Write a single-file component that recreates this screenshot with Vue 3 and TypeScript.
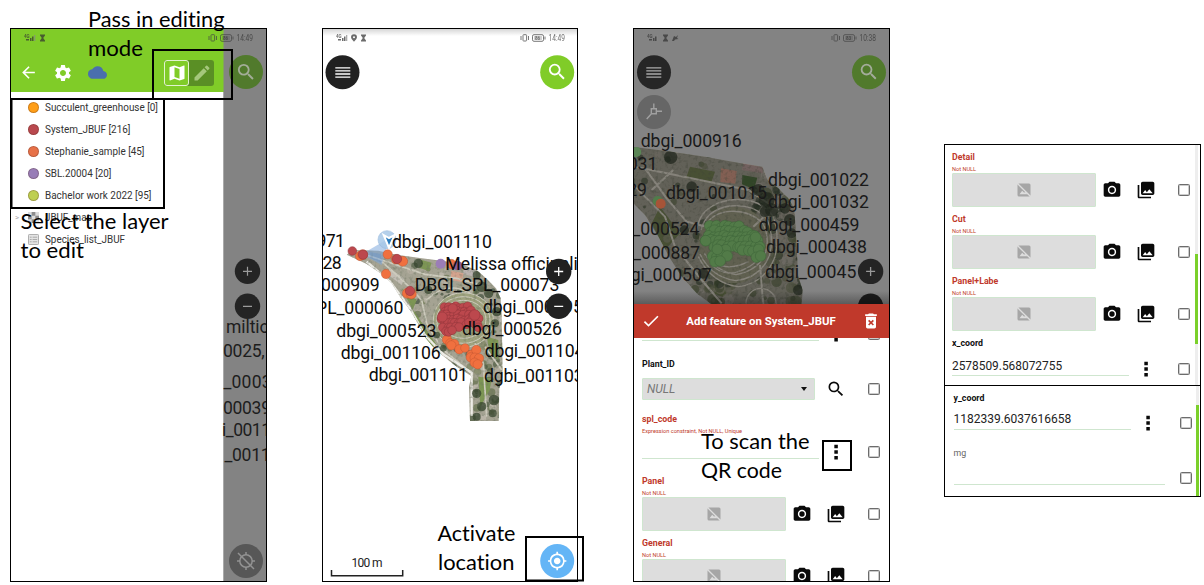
<script setup lang="ts">
interface Label { t: string; x: number; y: number; w: number }
interface Dot { x: number; y: number; r: number; c?: string }
interface Field {
  label: string
  hint?: string
  kind: 'media' | 'text' | 'combo' | 'wide'
  value?: string
  plain?: boolean
}

const icons = {
  search: 'M15.5 14h-.79l-.28-.27A6.471 6.471 0 0 0 16 9.5 6.5 6.5 0 1 0 9.5 16c1.61 0 3.09-.59 4.23-1.57l.27.28v.79l5 4.99L20.49 19l-4.99-5zm-6 0C7.01 14 5 11.99 5 9.5S7.01 5 9.5 5 14 7.01 14 9.5 11.99 14 9.5 14z',
  back: 'M20 11H7.83l5.59-5.59L12 4l-8 8 8 8 1.41-1.41L7.83 13H20v-2z',
  gear: 'M19.14 12.94c.04-.3.06-.61.06-.94 0-.32-.02-.64-.07-.94l2.03-1.58a.49.49 0 0 0 .12-.61l-1.92-3.32a.488.488 0 0 0-.59-.22l-2.39.96c-.5-.38-1.03-.7-1.62-.94l-.36-2.54a.484.484 0 0 0-.48-.41h-3.84c-.24 0-.43.17-.47.41l-.36 2.54c-.59.24-1.13.57-1.62.94l-2.39-.96c-.22-.08-.47 0-.59.22L2.74 8.87c-.12.21-.08.47.12.61l2.03 1.58c-.05.3-.09.63-.09.94s.02.64.07.94l-2.03 1.58a.49.49 0 0 0-.12.61l1.92 3.32c.12.22.37.29.59.22l2.39-.96c.5.38 1.03.7 1.62.94l.36 2.54c.05.24.24.41.48.41h3.84c.24 0 .44-.17.47-.41l.36-2.54c.59-.24 1.13-.56 1.62-.94l2.39.96c.22.08.47 0 .59-.22l1.92-3.32c.12-.22.07-.47-.12-.61l-2.01-1.58zM12 15.6c-1.98 0-3.6-1.62-3.6-3.6s1.62-3.6 3.6-3.6 3.6 1.62 3.6 3.6-1.62 3.6-3.6 3.6z',
  cloud: 'M19.35 10.04A7.49 7.49 0 0 0 12 4C9.11 4 6.6 5.64 5.35 8.04A5.994 5.994 0 0 0 0 14c0 3.31 2.69 6 6 6h13c2.76 0 5-2.24 5-5 0-2.64-2.05-4.78-4.65-4.96z',
  map: 'M20.5 3l-.16.03L15 5.1 9 3 3.36 4.9c-.21.07-.36.25-.36.48V20.5c0 .28.22.5.5.5l.16-.03L9 18.9l6 2.1 5.64-1.9c.21-.07.36-.25.36-.48V3.5c0-.28-.22-.5-.5-.5zM15 19l-6-2.11V5l6 2.11V19z',
  edit: 'M3 17.25V21h3.75L17.81 9.94l-3.75-3.75L3 17.25zM20.71 7.04a1 1 0 0 0 0-1.41l-2.34-2.34a1 1 0 0 0-1.41 0l-1.83 1.83 3.75 3.75 1.83-1.83z',
  camera: 'M12 8.8a3.2 3.2 0 1 0 0 6.4 3.2 3.2 0 0 0 0-6.4zM9 2L7.17 4H4c-1.1 0-2 .9-2 2v12c0 1.1.9 2 2 2h16c1.1 0 2-.9 2-2V6c0-1.1-.9-2-2-2h-3.17L15 2H9zm3 15c-2.76 0-5-2.24-5-5s2.24-5 5-5 5 2.24 5 5-2.24 5-5 5z',
  gallery: 'M22 16V4c0-1.1-.9-2-2-2H8c-1.1 0-2 .9-2 2v12c0 1.1.9 2 2 2h12c1.1 0 2-.9 2-2zm-11-4l2.03 2.71L16 11l4 5H8l3-4zM2 6v14c0 1.1.9 2 2 2h14v-2H4V6H2z',
  check: 'M9 16.17L4.83 12l-1.42 1.41L9 19 21 7l-1.41-1.41z',
  trash: 'M6 19c0 1.1.9 2 2 2h8c1.1 0 2-.9 2-2V7H6v12zm2.46-7.12l1.41-1.41L12 12.59l2.12-2.12 1.41 1.41L13.41 14l2.12 2.12-1.41 1.41L12 15.41l-2.12 2.12-1.41-1.41L10.59 14l-2.13-2.12zM15.5 4l-1-1h-5l-1 1H5v2h14V4z',
  gps: 'M12 8c-2.21 0-4 1.79-4 4s1.79 4 4 4 4-1.79 4-4-1.79-4-4-4zm8.94 3A8.994 8.994 0 0 0 13 3.06V1h-2v2.06A8.994 8.994 0 0 0 3.06 11H1v2h2.06A8.994 8.994 0 0 0 11 20.94V23h2v-2.06A8.994 8.994 0 0 0 20.94 13H23v-2h-2.06zM12 19c-3.87 0-7-3.13-7-7s3.13-7 7-7 7 3.13 7 7-3.13 7-7 7z',
  dots: 'M10 3.2h4.200v4.200H10zM10 10h4.200v4.200H10zM10 16.800h4.200v4.200H10z',
}

const layers = [
  { name: 'Succulent_greenhouse [0]', color: '#ff9e17', w: 113 },
  { name: 'System_JBUF [216]', color: '#b9484e', w: 85.5 },
  { name: 'Stephanie_sample [45]', color: '#e77148', w: 99.5 },
  { name: 'SBL.20004 [20]', color: '#987db7', w: 66.5 },
  { name: 'Bachelor work 2022 [95]', color: '#becf50', w: 106.5 },
]

const stripLabels: Label[] = [
  { t: 'miltiorrhiza', x: 226, y: 332.5, w: 87 },
  { t: '0025, SPL', x: 223, y: 356.5, w: 76 },
  { t: '_0003', x: 223.5, y: 388, w: 48 },
  { t: '00039', x: 223, y: 414, w: 48 },
  { t: 'i_0011', x: 222, y: 435.5, w: 49 },
  { t: '_0011', x: 224.5, y: 461, w: 46 },
]

const mapLabels: Label[] = [
  { t: '_000971', x: -86, y: 80, w: 191 },
  { t: '_000928', x: -96, y: 147, w: 191 },
  { t: 'dbgi_000909', x: -91, y: 214, w: 300 },
  { t: 'DBGI_SPL_000060', x: -153, y: 281, w: 433 },
  { t: 'dbgi_000523', x: 79, y: 351, w: 300 },
  { t: 'dbgi_001106', x: 92, y: 418, w: 300 },
  { t: 'dbgi_001101', x: 176, y: 482, w: 298 },
  { t: 'dbgi_001110', x: 246, y: 85, w: 300 },
  { t: 'Melissa officinalis', x: 406, y: 150, w: 425 },
  { t: 'DBGI_SPL_000073', x: 314, y: 213, w: 434 },
  { t: 'dbgi_000995', x: 519, y: 280, w: 300 },
  { t: 'dbgi_000526', x: 456, y: 345, w: 300 },
  { t: 'dbgi_001104', x: 524, y: 410, w: 299 },
  { t: 'dgbi_001103', x: 522, y: 487, w: 299 },
]

const dimLabels: Label[] = [
  { t: 'dbgi_000916', x: 47, y: 52, w: 303 },
  { t: 'dbgi_001031', x: -206, y: 120, w: 303 },
  { t: 'dbgi_000929', x: -237, y: 199, w: 303 },
  { t: 'dbgi_001015', x: 123, y: 207, w: 303 },
  { t: 'dbgi_001022', x: 429, y: 168, w: 303 },
  { t: 'dbgi_001032', x: 429, y: 235, w: 303 },
  { t: 'dbgi_000459', x: 401, y: 304, w: 302 },
  { t: 'dbgi_000438', x: 423, y: 368, w: 303 },
  { t: 'dbgi_00045', x: 420, y: 443, w: 274 },
  { t: 'dbgi_000524', x: -79, y: 316, w: 302 },
  { t: 'dbgi_000887', x: -77, y: 388, w: 302 },
  { t: 'dbgi_000507', x: -42, y: 452, w: 302 },
]

function rng(seed: number) {
  let s = seed
  return () => {
    s = (s * 16807) % 2147483647
    return s / 2147483647
  }
}

const leafTones = ['#45543a', '#5d6c46', '#7c8460', '#3b4937', '#a09f8c', '#b8b1a4', '#68754e', '#c4beb4']
function foliage(seed: number, n: number, x0: number, x1: number, y0: number, y1: number, size: number): Dot[] {
  const r = rng(seed)
  return Array.from({ length: n }, () => ({
    x: x0 + r() * (x1 - x0),
    y: y0 + r() * (y1 - y0),
    r: size * (0.4 + r()),
    c: leafTones[Math.floor(r() * leafTones.length)],
  }))
}

// Each row: [y, left, right]
function cluster(seed: number, rows: number[][], step: number, radius: number): Dot[] {
  const r = rng(seed)
  const out: Dot[] = []
  for (const [y, a, b] of rows) {
    for (let x = a; x <= b; x += step) out.push({ x: x + r() * 8 - 4, y: y + r() * 8 - 4, r: radius })
  }
  return out
}

const foliageA = [
  ...foliage(11, 130, 300, 580, 120, 450, 8),
  ...foliage(5, 45, 230, 480, 200, 440, 7),
  ...foliage(31, 60, 480, 580, 380, 600, 9),
]
const darkTreesA: Dot[] = [
  { x: 325, y: 130, r: 14 }, { x: 355, y: 210, r: 12 }, { x: 500, y: 165, r: 12 }, { x: 515, y: 200, r: 16 }, { x: 536, y: 220, r: 14 },
  { x: 560, y: 275, r: 14 }, { x: 555, y: 310, r: 12 }, { x: 380, y: 345, r: 10 }, { x: 500, y: 520, r: 14 }, { x: 515, y: 560, r: 14 },
  { x: 552, y: 540, r: 16 }, { x: 548, y: 580, r: 12 }, { x: 500, y: 590, r: 12 }, { x: 400, y: 385, r: 10 },
]
const foliageB = [
  ...foliage(17, 90, 20, 530, 40, 520, 9),
  ...foliage(23, 50, 380, 530, 130, 260, 13),
  ...foliage(41, 50, 420, 530, 250, 520, 13),
  ...foliage(7, 50, 150, 330, 430, 520, 13),
]
const darkTreesB: Dot[] = [
  { x: 137, y: 82, r: 20 }, { x: 200, y: 170, r: 16 }, { x: 400, y: 180, r: 18 }, { x: 425, y: 210, r: 24 }, { x: 440, y: 240, r: 20 },
  { x: 495, y: 270, r: 18 }, { x: 500, y: 310, r: 15 }, { x: 420, y: 245, r: 16 }, { x: 520, y: 480, r: 16 }, { x: 235, y: 430, r: 16 },
  { x: 178, y: 300, r: 14 }, { x: 480, y: 235, r: 16 },
]

const redCluster = cluster(3, [
  [262, 407, 475], [274, 408, 495], [286, 396, 502], [298, 396, 506], [310, 402, 505], [322, 402, 448], [334, 405, 428],
], 11, 13)
const redExtra: Dot[] = [
  { x: 428, y: 265, r: 14 }, { x: 494, y: 285, r: 16 }, { x: 397, y: 291, r: 15 }, { x: 505, y: 322, r: 13 },
]
const greenCluster = cluster(9, [
  [290, 258, 345], [304, 258, 380], [318, 252, 400], [332, 244, 405], [348, 265, 408], [362, 275, 312], [362, 355, 410], [378, 262, 310], [380, 398, 410], [396, 272, 290],
], 14, 16)
greenCluster.push({ x: 392, y: 322, r: 16 }, { x: 407, y: 378, r: 16 }, { x: 277, y: 358, r: 16 }, { x: 242, y: 332, r: 16 })

const orangeDots: Dot[] = [
  { x: 150, y: 108, r: 14 }, { x: 158, y: 104, r: 15 }, { x: 233, y: 103, r: 14 }, { x: 228, y: 162, r: 14 },
  { x: 258, y: 118, r: 14 }, { x: 278, y: 124, r: 15 }, { x: 292, y: 220, r: 15 }, { x: 304, y: 222, r: 15 },
  { x: 411, y: 359, r: 14 }, { x: 421, y: 370, r: 14 }, { x: 433, y: 372, r: 14 }, { x: 424, y: 376, r: 14 },
  { x: 448, y: 388, r: 14 }, { x: 465, y: 384, r: 13 }, { x: 484, y: 404, r: 14 }, { x: 499, y: 390, r: 14 },
  { x: 482, y: 412, r: 14 }, { x: 494, y: 413, r: 14 }, { x: 507, y: 415, r: 14 }, { x: 494, y: 428, r: 14 }, { x: 503, y: 433, r: 14 },
  { x: 424, y: 132, r: 14 },
]
const redDots: Dot[] = [
  { x: 127, y: 93, r: 13 }, { x: 159, y: 104, r: 14 }, { x: 261, y: 117, r: 14 }, { x: 300, y: 213, r: 14 },
]
const outlineA = '110,104 128,90 205,92 260,104 330,114 440,128 500,150 530,176 558,205 572,235 575,300 577,380 578,470 568,505 566,603 480,603 477,500 484,468 440,440 400,408 375,388 345,352 325,312 300,270 270,230 245,190 215,162 170,132'
const outlineB = '0,48 120,62 240,80 340,98 412,110 428,150 460,175 490,205 508,235 512,300 516,370 520,440 533,480 530,525 262,525 215,490 170,440 135,385 100,320 60,255 0,195'

const phoneForm: Field[] = [
  { label: 'Plant_ID', kind: 'combo', value: 'NULL' },
  { label: 'spl_code', hint: 'Expression constraint, Not NULL, Unique', kind: 'text' },
  { label: 'Panel', hint: 'Not NULL', kind: 'media' },
  { label: 'General', hint: 'Not NULL', kind: 'media' },
]
const upperForm: Field[] = [
  { label: 'Detail', hint: 'Not NULL', kind: 'media' },
  { label: 'Cut', hint: 'Not NULL', kind: 'media' },
  { label: 'Panel+Labe', hint: 'Not NULL', kind: 'media' },
  { label: 'x_coord', kind: 'text', value: '2578509.568072755' },
]
const lowerForm: Field[] = [
  { label: 'y_coord', kind: 'text', value: '1182339.6037616658' },
  { label: 'mg', kind: 'wide', plain: true },
]
const forms = { phone: phoneForm, upper: upperForm, lower: lowerForm }

const notes: Label[] = [
  { t: 'Pass in editing', x: 88, y: 26.5, w: 136.5 },
  { t: 'mode', x: 88, y: 55.5, w: 55 },
  { t: 'Select the layer', x: 20.5, y: 229, w: 148 },
  { t: 'to edit', x: 20.5, y: 258, w: 63.5 },
  { t: 'Activate', x: 437.5, y: 541, w: 78 },
  { t: 'location', x: 438, y: 569.7, w: 76.5 },
  { t: 'To scan the', x: 701, y: 448.7, w: 108.5 },
  { t: 'QR code', x: 701, y: 477.7, w: 81 },
]
const frames = [
  { x: 153, y: 50, w: 79, h: 49 },
  { x: 11.5, y: 99, w: 152.5, h: 109 },
  { x: 526, y: 537, w: 57, h: 43.5 },
  { x: 823, y: 441, w: 28, h: 29 },
]
const statusBars = [
  { x: 10, pin: false, bug: false, time: '14:49', level: '86' },
  { x: 322, pin: true, bug: false, time: '14:49', level: '86' },
  { x: 633, pin: false, bug: true, time: '10:38', level: '83' },
]
</script>

<template>
  <main class="board">
    <section class="phone">
      <div class="drawer">
        <header class="drawer-head">
          <svg class="i18" viewBox="0 0 24 24"><path :d="icons.back" /></svg>
          <svg class="i20" viewBox="0 0 24 24"><path :d="icons.gear" /></svg>
          <svg class="cloud" viewBox="0 0 24 24"><path :d="icons.cloud" /></svg>
          <div class="toggle">
            <span class="mode on"><svg class="i20" viewBox="0 0 24 24"><path :d="icons.map" /></svg></span>
            <span class="mode"><svg class="i20" viewBox="0 0 24 24"><path :d="icons.edit" /></svg></span>
          </div>
        </header>
        <ul class="layers">
          <li v-for="l in layers" :key="l.name">
            <i class="swatch" :style="{ background: l.color }"></i>
            <svg class="layer-name" height="14" width="150"><text x="0" y="10.500" :textLength="l.w" lengthAdjust="spacingAndGlyphs">{{ l.name }}</text></svg>
          </li>
          <li>
            <span class="caret">&gt;</span>
            <svg class="raster" viewBox="0 0 12 12"><path fill="#ddd" d="M0 0h12v12H0z" /><path fill="#8d8d8d" d="M4 0h4v4H4zM0 4h4v4H0zM8 4h4v4H8zM4 8h4v4H4z" /></svg>
            <svg class="layer-name" height="14" width="150"><text x="0" y="10.500" textLength="47" lengthAdjust="spacingAndGlyphs">JBUF_map</text></svg>
          </li>
          <li>
            <svg class="raster" viewBox="0 0 12 12"><rect x=".5" y=".5" width="11" height="11" rx="1" fill="#e4e4e4" stroke="#a5a5a5" /><path stroke="#a5a5a5" d="M2 3.500h2M5 3.500h5M2 6h2M5 6h5M2 8.500h2M5 8.500h5" /></svg>
            <svg class="layer-name" height="14" width="150"><text x="0" y="10.500" textLength="80" lengthAdjust="spacingAndGlyphs">Species_list_JBUF</text></svg>
          </li>
        </ul>
      </div>
      <svg class="canvas" viewBox="11 29 255 552">
        <path fill="#838383" d="M223.500 29H266v552h-42.500z" />
        <path stroke="#aaa" d="M223.500 92v489" />
        <circle cx="246" cy="72" r="17" fill="#517a2c" />
        <g transform="translate(235.200 61.200) scale(.9)" fill="#a3ad98"><path :d="icons.search" /></g>
        <circle cx="247.500" cy="271.300" r="12.700" fill="#242424" />
        <circle cx="247.500" cy="306.300" r="12.700" fill="#242424" />
        <path stroke="#9c9c9c" stroke-width="1.200" d="M243 271.300h9M247.500 266.800v9M243 306.300h9" />
        <text v-for="l in stripLabels" :key="l.t" class="dim-text" font-size="17.500" :x="l.x" :y="l.y" :textLength="l.w">{{ l.t }}</text>
        <circle cx="246" cy="561" r="17" fill="#575757" />
        <g fill="none" stroke="#929292" stroke-width="1.500">
          <circle cx="246" cy="561" r="6.200" /><path d="M238 553l16 16M246 552v3M246 567v3M237 561h3M252 561h3" />
        </g>
      </svg>
    </section>

    <section class="phone">
      <svg class="canvas" viewBox="323 29 254 552">
        <defs>
          <clipPath id="siteA"><polygon :points="outlineA" /></clipPath>
          <clipPath id="siteB"><polygon :points="outlineB" /></clipPath>
          <filter id="grain" x="0" y="0" width="100%" height="100%">
            <feTurbulence type="fractalNoise" baseFrequency=".1" numOctaves="2" seed="4" />
            <feColorMatrix values="0 0 0 0 .15  0 0 0 0 .18  0 0 0 0 .12  3 0 0 0 -1.500" />
          </filter>
          <linearGradient id="topShade" x2="0" y2="1"><stop offset="0" stop-color="#000" stop-opacity=".16" /><stop offset="1" stop-color="#000" stop-opacity="0" /></linearGradient>
        </defs>
        <rect x="323" y="29" width="254" height="7" fill="url(#topShade)" />
        <g transform="translate(310 220) scale(.33333)">
          <g clip-path="url(#siteA)">
            <path fill="#a5a393" d="M100 80h490v530H100z" />
            <circle v-for="(d, i) in foliageA" :key="i" :cx="d.x" :cy="d.y" :r="d.r" :fill="d.c" opacity=".65" />
            <path fill="#7d9654" d="M335 120l30 8-8 25-30-10zM275 205l45 35-12 30zM310 270l70 105-18 8-50-60zM505 470l40 5-6 35-28 50zM530 350l35 10v60l-25-20z" />
            <path fill="#d3a28d" d="M423 152l38 8-6 26-32-6z" />
            <path fill="#bab3b0" d="M462 142l36 10-4 18-34-8z" />
            <path fill="#7d90a0" d="M178 96l35 6 2 26-35-14z" />
            <path fill="#c3beb5" d="M238 145l45 30-8 20-40-30z" />
            <ellipse cx="460" cy="300" rx="92" ry="82" fill="#9fa37f" />
            <g fill="none" stroke="#cdcbbd" stroke-width="3">
              <ellipse cx="460" cy="300" rx="90" ry="82" /><ellipse cx="460" cy="300" rx="80" ry="70" /><ellipse cx="460" cy="298" rx="68" ry="57" />
              <path stroke-width="5" d="M130 92L245 130 345 163 440 175 530 200M215 125q70 60 120 115l15 70 45 75 90 75M350 240q60-60 130-20M495 370l25 60 10 160M525 380l50 70" />
            </g>
            <path stroke="#edece6" stroke-width="7" d="M170 125l70 60 60 80 45 80 55 58 85 55v130" fill="none" />
            <circle v-for="(d, i) in darkTreesA" :key="'t' + i" :cx="d.x" :cy="d.y" :r="d.r" fill="#33412b" opacity=".75" />
            <path d="M100 80h490v530H100z" filter="url(#grain)" opacity=".5" />
          </g>
          <path fill="#7fa9dc" opacity=".55" d="M155 103L237 55 215 135z" />
          <circle cx="231" cy="59" r="27" fill="#a8c8e8" stroke="#94b6db" stroke-width="2" opacity=".85" />
          <path fill="#287bbd" stroke="#fff" stroke-width="6" d="M221 45l16 9 17-9-17 38z" />
          <circle v-for="(d, i) in orangeDots" :key="'o' + i" :cx="d.x" :cy="d.y" :r="d.r" fill="#f0703f" stroke="#b95231" stroke-width="1.200" />
          <circle v-for="(d, i) in [...redDots, ...redCluster, ...redExtra]" :key="'r' + i" :cx="d.x" :cy="d.y" :r="d.r" fill="#bc484d" stroke="#8f343a" stroke-width="1.600" />
          <circle cx="392" cy="131" r="15" fill="#9b7db7" /><circle cx="443" cy="137" r="14" fill="#8f5c91" />
          <text v-for="l in mapLabels" :key="l.t" class="map-text" :x="l.x" :y="l.y" :textLength="l.w">{{ l.t }}</text>
        </g>
        <circle cx="342.500" cy="72.200" r="17" fill="#212121" />
        <path stroke="#fff" stroke-width="1.300" d="M335.300 67.800h15M335.300 70.900h15M335.300 74h15M335.300 77.100h15" />
        <circle cx="557.200" cy="72.200" r="17" fill="#80cc28" />
        <g transform="translate(546.200 61) scale(.9)" fill="#fff"><path :d="icons.search" /></g>
        <circle cx="558.700" cy="271.500" r="12.700" fill="#212121" />
        <circle cx="558.700" cy="306.300" r="12.700" fill="#212121" />
        <path stroke="#fff" stroke-width="1.300" d="M554.200 271.500h9M558.700 267v9M554.200 306.300h9" />
        <text class="scale-text" x="351.500" y="566.500" textLength="31">100 m</text>
        <path fill="none" stroke="#222" stroke-width="1.500" d="M331.500 570v5.700h71.200V570" />
        <circle cx="557.200" cy="561" r="17" fill="#64b5f6" />
        <g transform="translate(547.200 551) scale(.833)" fill="#fff"><path :d="icons.gps" /></g>
      </svg>
    </section>

    <section class="phone form-phone">
      <div class="map-area">
        <svg class="canvas" viewBox="634 29 255 275">
          <path fill="#838383" d="M634 29h256v275H634z" />
          <g transform="translate(625 130) scale(.33333)">
            <g clip-path="url(#siteB)">
              <path fill="#aaa798" d="M0 40h540v490H0z" />
              <path fill="#7d8a5a" d="M195 110l75 15-12 35-75-15zM105 230l60 80-45 50-40-80zM270 430l60 20-15 60-50-20z" />
              <circle v-for="(d, i) in foliageB" :key="i" :cx="d.x" :cy="d.y" :r="d.r" :fill="d.c" opacity=".6" />
              <ellipse cx="328" cy="345" rx="108" ry="115" fill="#a6a68a" />
              <g fill="none" stroke="#e6e1d3" stroke-width="4">
                <path d="M215 300q10-75 100-90 90-10 130 50 20 60 5 120-30 80-110 90-80-10-120-90" />
                <path d="M228 300q15-60 85-72 80-8 115 44 20 50 5 105-25 65-100 75-75-10-108-80" />
                <path d="M240 290q20-42 75-46 60-4 100 38 20 45 6 88-20 50-88 64-60-10-95-64" />
                <path d="M255 400q30 35 75 28 50-14 70-42M280 405q40 15 90-10" />
                <path stroke-width="6" d="M30 110l220 45 120 25 90 60M60 115l65 90 60 70 60 15M30 170l90 90 30 90 80 100 60 70M385 290l30-28M405 405l10 120M80 180l65-60" />
                <circle cx="408" cy="520" r="45" />
              </g>
              <path fill="#e0a48f" d="M288 115l47 8-4 38-45-5z" /><path fill="#c3a6a2" d="M355 98l58 14v18l-62-10z" />
              <path fill="#557844" d="M352 135l45 8-10 35-36-15z" />
              <circle v-for="(d, i) in darkTreesB" :key="'t' + i" :cx="d.x" :cy="d.y" :r="d.r" fill="#364030" opacity=".75" />
              <path d="M0 40h540v490H0z" filter="url(#grain)" opacity=".45" />
            </g>
          </g>
          <path fill="#000" opacity=".42" d="M634 140h183v164H634z" clip-path="url(#dimArea)" />
          <defs>
            <clipPath id="dimArea"><polygon :points="outlineB" transform="translate(625 130) scale(.33333)" /></clipPath>
            <linearGradient id="footShade" x2="0" y2="1"><stop offset="0" stop-opacity="0" /><stop offset="1" stop-opacity=".3" /></linearGradient>
          </defs>
          <g transform="translate(625 130) scale(.33333)">
            <circle cx="34" cy="66" r="15" fill="#5a8555" /><circle cx="98" cy="213" r="15" fill="#517c4b" />
            <circle cx="107" cy="221" r="15" fill="#a75438" />
            <circle v-for="(d, i) in greenCluster" :key="i" :cx="d.x" :cy="d.y" :r="d.r" fill="#527b48" stroke="#3d6338" stroke-width="1.500" />
            <text v-for="l in dimLabels" :key="l.t" class="map-text dim" :x="l.x" :y="l.y" :textLength="l.w">{{ l.t }}</text>
          </g>
          <circle cx="654" cy="72.200" r="17" fill="#262626" />
          <path stroke="#aaa" stroke-width="1.300" d="M646.300 67.800h15M646.300 70.900h15M646.300 74h15M646.300 77.100h15" />
          <circle cx="654" cy="112" r="17" fill="#666" />
          <path fill="none" stroke="#a0a0a0" stroke-width="1.400" d="M651.300 108.800h5v5h-5zM653.800 108.500v-5M656.500 111.300h5.500M651.200 114l-4.500 5" />
          <circle cx="869" cy="72.200" r="17" fill="#517a2c" />
          <g transform="translate(858 61) scale(.9)" fill="#a4ac9b"><path :d="icons.search" /></g>
          <circle cx="870.600" cy="271.400" r="12.700" fill="#242424" />
          <circle cx="870.600" cy="306.300" r="12.700" fill="#1c1c1c" />
          <path stroke="#999" stroke-width="1.300" d="M866.100 271.400h9M870.600 266.900v9" />
          <path fill="url(#footShade)" d="M634 291h256v13H634z" />
        </svg>
      </div>
      <header class="edit-bar">
        <svg class="i20" viewBox="0 0 24 24"><path :d="icons.check" /></svg>
        <h1>Add feature on System_JBUF</h1>
        <svg class="i20" viewBox="0 0 24 24"><path :d="icons.trash" /></svg>
      </header>
      <div class="form clipped">
        <div class="body first">
          <span class="line"></span><svg class="act dots" viewBox="0 0 24 24"><path :d="icons.dots" /></svg><i class="box"></i>
        </div>
        <div v-for="f in forms.phone" :key="f.label" class="field" :class="[f.kind, { bad: f.hint }]">
          <label>{{ f.label }}</label>
          <small v-if="f.hint">{{ f.hint }}</small>
          <div class="body">
            <template v-if="f.kind === 'media'">
              <span class="thumb"><svg viewBox="0 0 14 14"><rect x=".5" y=".5" width="13" height="13" rx="1.500" fill="#a6a6a6" /><path fill="#ddd" d="M2.500 11.200l2.700-3.500 2 2 1-1 2.500 2.500z" /><path stroke="#ddd" stroke-width="1.300" d="M0 0l14 14" /></svg></span>
              <svg class="act cam" viewBox="0 0 24 24"><path :d="icons.camera" /></svg>
              <svg class="act gal" viewBox="0 0 24 24"><path :d="icons.gallery" /></svg>
            </template>
            <template v-else-if="f.kind === 'combo'">
              <span class="combo-box"><em>{{ f.value }}</em><b></b></span>
              <svg class="act find" viewBox="0 0 24 24"><path :d="icons.search" /></svg>
            </template>
            <template v-else>
              <span class="line">{{ f.value }}</span>
              <svg class="act dots" viewBox="0 0 24 24"><path :d="icons.dots" /></svg>
            </template>
            <i class="box"></i>
          </div>
        </div>
      </div>
    </section>

    <section class="side">
      <div v-for="key in (['upper', 'lower'] as const)" :key="key" class="form panel" :class="key">
        <div v-for="f in forms[key]" :key="f.label" class="field" :class="[f.kind, { bad: f.hint, plain: f.plain }]">
          <label>{{ f.label }}</label>
          <small v-if="f.hint">{{ f.hint }}</small>
          <div class="body">
            <template v-if="f.kind === 'media'">
              <span class="thumb"><svg viewBox="0 0 14 14"><rect x=".5" y=".5" width="13" height="13" rx="1.500" fill="#a6a6a6" /><path fill="#ddd" d="M2.500 11.200l2.700-3.500 2 2 1-1 2.500 2.500z" /><path stroke="#ddd" stroke-width="1.300" d="M0 0l14 14" /></svg></span>
              <svg class="act cam" viewBox="0 0 24 24"><path :d="icons.camera" /></svg>
              <svg class="act gal" viewBox="0 0 24 24"><path :d="icons.gallery" /></svg>
            </template>
            <template v-else>
              <span class="line">{{ f.value }}</span>
              <svg v-if="f.kind === 'text'" class="act dots" viewBox="0 0 24 24"><path :d="icons.dots" /></svg>
            </template>
            <i class="box"></i>
          </div>
        </div>
        <i class="scroll"></i>
      </div>
    </section>

    <svg class="overlay" viewBox="0 0 1204 585">
      <g v-for="s in statusBars" :key="s.x" :transform="`translate(${s.x} 0)`" opacity=".72">
        <text class="tiny" x="14" y="37.500">4G</text>
        <path fill="#333" d="M16 39h3v1.500h-3zM20 38h1.500v3H20zM22 36.500h1.500V41H22z" /><path fill="#888" d="M24 35h1.300v6H24z" />
        <g :transform="s.pin ? 'translate(9 0)' : ''">
          <path fill="#333" d="M30 34.500h5v1l-1.800 2.500 1.800 2.500v1h-5v-1l1.800-2.500-1.800-2.500z" />
        </g>
        <path v-if="s.pin" fill="#333" fill-rule="evenodd" d="M32 34.300a3 3 0 0 1 3 3q0 2-3 4.500-3-2.500-3-4.500a3 3 0 0 1 3-3zm0 2a1 1 0 1 0 0 2 1 1 0 0 0 0-2z" />
        <path v-if="s.bug" fill="#333" d="M39 41l2-5 2 1 2-2-1 3 1.500 1-3.500.500-1 1.500z" />
        <g fill="none" stroke="#444">
          <rect x="201" y="34.700" width="3.600" height="6.300" rx=".6" /><path d="M199 36v4M206.500 36v4" />
          <rect x="210.500" y="34.700" width="11" height="6.600" rx="1.500" /><path d="M223 36.500v3" />
        </g>
        <rect x="212" y="36" width="8" height="4" fill="#444" opacity=".35" />
        <text class="tiny" x="213" y="40.300">{{ s.level }}</text>
        <text class="clock" x="226.500" y="41" textLength="16.500" lengthAdjust="spacingAndGlyphs">{{ s.time }}</text>
      </g>
      <rect v-for="(f, i) in frames" :key="i" :x="f.x" :y="f.y" :width="f.w" :height="f.h" fill="none" stroke="#000" stroke-width="2" />
      <text v-for="n in notes" :key="n.t" class="note" :x="n.x" :y="n.y" :textLength="n.w" lengthAdjust="spacingAndGlyphs">{{ n.t }}</text>
    </svg>
  </main>
</template>

<style>
body { background: #fff; }
</style>

<style scoped>
* { box-sizing: border-box; }
.board {
  position: relative;
  width: 1204px;
  height: 585px;
  overflow: hidden;
  padding: 28px 0 0 10px;
  display: grid;
  grid-template-columns: 257px 256px 256px 257px;
  column-gap: 55px;
  align-items: start;
  font-family: Roboto, "Liberation Sans", sans-serif;
  color: #222;
}
.phone { position: relative; height: 554px; border: 1px solid #000; overflow: hidden; background: #fff; }
.form-phone { width: 257px; display: flex; flex-direction: column; }
.canvas { position: absolute; top: 0; left: 0; width: 100%; height: 100%; display: block; }
.overlay { position: absolute; top: 0; left: 0; width: 1204px; height: 585px; }
.drawer { width: 213px; height: 100%; }
.drawer-head { height: 63px; padding: 24px 10px 0 8px; background: #80cc28; display: flex; align-items: center; fill: #fff; }
.i18 { width: 19px; height: 19px; }
.i20 { width: 20px; height: 20px; }
.drawer-head > .i20 { margin-left: 15px; }
.cloud { width: 19px; height: 19px; margin-left: 15px; fill: #4a6fae; }
.toggle { margin-left: auto; display: flex; height: 26px; border-radius: 3px; background: #5a8f25; }
.mode { width: 25px; display: flex; align-items: center; justify-content: center; fill: #a5c77c; }
.mode.on { background: #80cc28; border: 1px solid #e2f3cf; border-radius: 3px; fill: #fff; }
.layers { list-style: none; margin: 0; padding: 4.5px 0 0 17px; }
.layers li { position: relative; height: 22px; display: flex; align-items: center; }
.swatch { width: 11px; height: 11px; border-radius: 50%; border: 1px solid rgba(80, 40, 30, .28); flex: none; }
.raster { width: 11px; height: 11px; flex: none; }
.caret { position: absolute; left: -13px; font-size: 8px; color: #aaa; }
.layer-name { margin: -1px 0 0 6px; font-size: 10.5px; fill: #333; }
.dim-text { fill: #1d1d1d; }
.map-text { font-size: 53px; fill: #0b0b0b; }
.map-text.dim { fill: #191919; }
.scale-text { font-size: 12px; fill: #222; }
.tiny { font-size: 4.5px; font-weight: 700; fill: #333; }
.clock { font-size: 8.5px; fill: #333; }
.note { font-family: Lato, "Open Sans", sans-serif; font-size: 20.5px; font-variant-ligatures: none; fill: #000; }
.map-area { position: relative; height: 275px; flex: none; background: #838383; }
.edit-bar { position: relative; flex: none; height: 34px; padding: 0 8px 0 7px; background: #c0392b; fill: #fff; display: flex; align-items: center; justify-content: space-between; }
.edit-bar h1 { margin: 0; font-size: 11.4px; font-weight: 700; color: #fff; white-space: nowrap; }
.form { position: relative; overflow: hidden; background: #fff; }
.clipped { flex: 1; min-height: 0; padding-left: 8px; }
.body { display: flex; align-items: center; width: 238px; height: 34px; }
.body.first { margin: -21.5px 0 5px; }
.field { padding-bottom: 4px; }
.field label { display: block; height: 16px; line-height: 17px; font-size: 8.8px; font-weight: 700; color: #111; }
.field small { display: block; height: 8px; line-height: 9px; font-size: 5.6px; color: #c0392b; }
.field.bad label { color: #c0392b; }
.field.combo .body { height: 35px; }
.field.plain label { font-weight: 400; color: #666; }
.thumb { width: 144px; height: 34px; display: flex; align-items: center; justify-content: center; background: #ddd; border: 1px solid #cfe6cf; border-radius: 1px; flex: none; }
.thumb svg { width: 14px; height: 14px; }
.act { width: 20px; height: 20px; flex: none; fill: #0a0a0a; }
.cam { margin-left: 6px; }
.gal { margin-left: 14px; }
.find { margin-left: 11px; }
.dots { margin-left: 7px; }
.box { margin-left: auto; width: 12px; height: 12px; border: 1px solid #6c6c6c; border-radius: 1.5px; flex: none; background: #fff; box-shadow: inset 0 0 0 .5px #999; }
.line { width: 177px; height: 14px; border-bottom: 1px solid #cfe6cf; font-size: 12px; line-height: 14px; position: relative; color: #222; }
.panel .text .line { height: 20px; line-height: 19px; margin-top: -6px; }
.upper .text .line { font-size: 11.9px; line-height: 20px; }
.wide .line { width: 211px; }
.combo-box { width: 173px; height: 22px; padding: 0 7px 0 4px; display: flex; align-items: center; justify-content: space-between; background: #ddd; border: 1px solid #cfe6cf; border-radius: 1px; font-size: 12px; color: #777; }
.combo-box b { border: 3.5px solid transparent; border-top: 4px solid #111; border-bottom: 0; }
.side { width: 257px; height: 353px; margin-top: 116px; border: 1px solid #000; display: flex; flex-direction: column; }
.panel { padding-left: 7px; padding-top: 3.5px; }
.upper { height: 241px; border-bottom: 1px solid #000; flex: none; }
.lower { flex: 1; padding-left: 8.5px; }
.upper .text .body { margin-top: 1px; }
.lower .field .body { margin-top: .5px; }
.lower .wide { margin-top: .5px; }
.scroll { position: absolute; right: 2px; top: 0; width: 3px; height: 100%; background: linear-gradient(#eee 0 109px, #7bd02a 109px 199px, #eee 199px); }
.lower .scroll { right: 1px; background: linear-gradient(#eee 0 19px, #7bd02a 19px); }
</style>
